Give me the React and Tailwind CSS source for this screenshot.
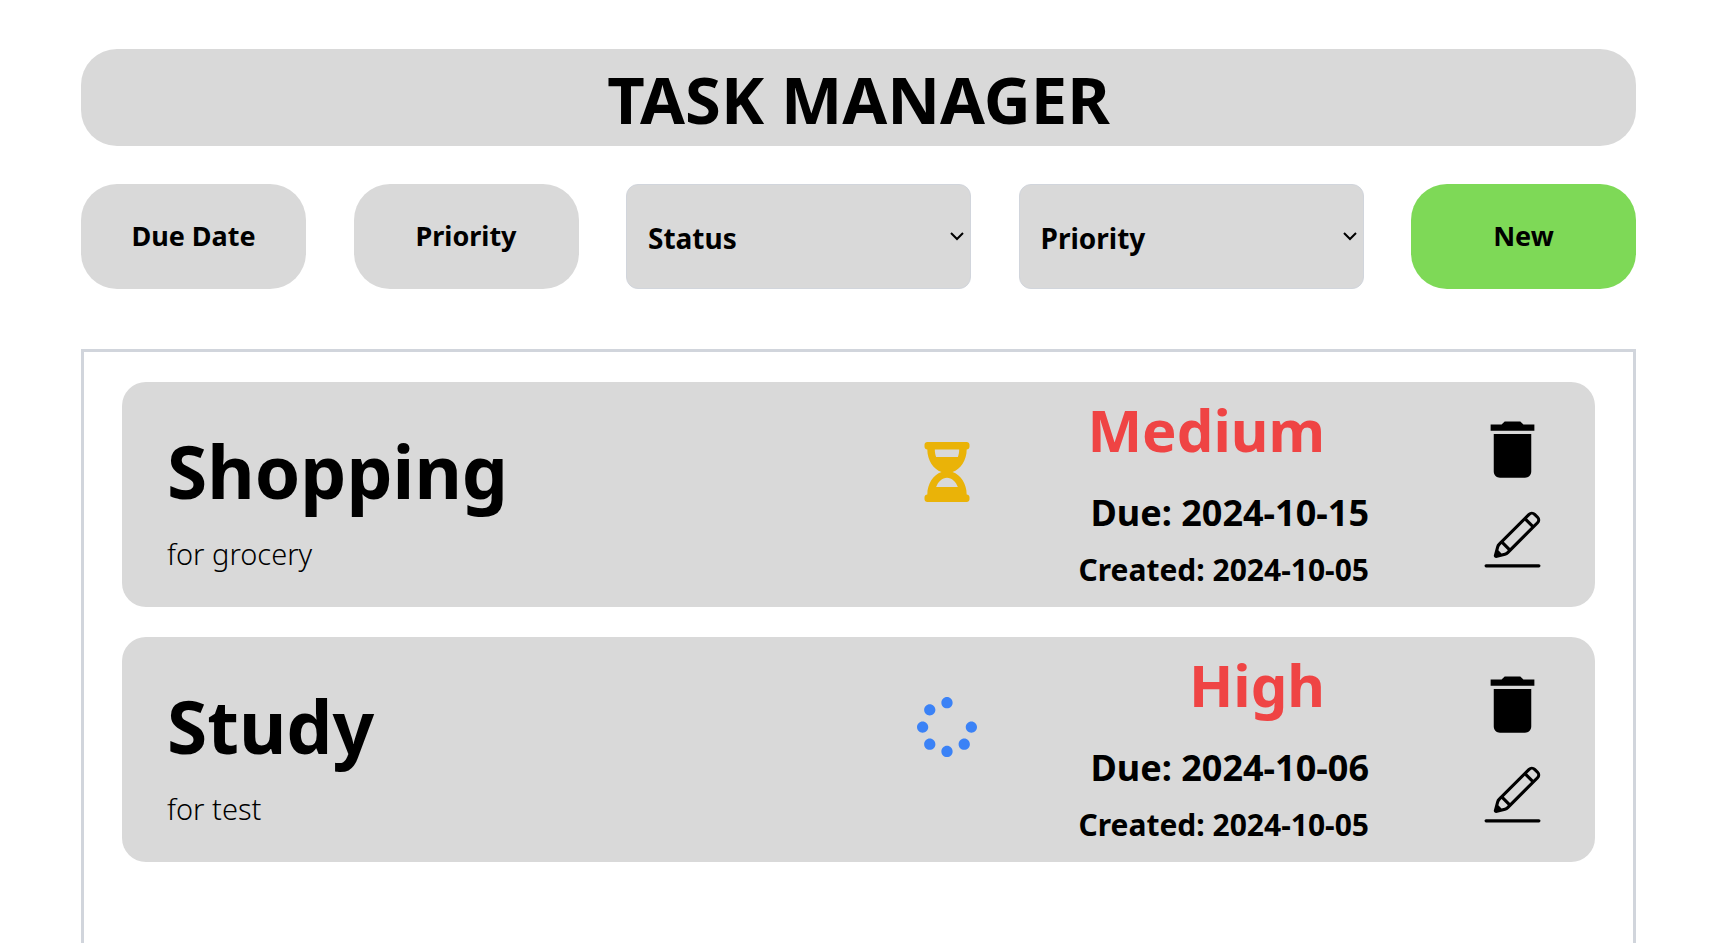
import React from 'react';
import { FaHourglassHalf, FaSpinner } from 'react-icons/fa';
import { MdDelete } from 'react-icons/md';
import { CiEdit } from 'react-icons/ci';

const tasks = [
  {
    title: 'Shopping',
    description: 'for grocery',
    status: 'pending',
    priority: 'Medium',
    due: '2024-10-15',
    created: '2024-10-05',
  },
  {
    title: 'Study',
    description: 'for test',
    status: 'in-progress',
    priority: 'High',
    due: '2024-10-06',
    created: '2024-10-05',
  },
];

function PillButton({ children, color }) {
  return (
    <button
      type="button"
      className={`h-[105px] w-[225px] shrink-0 rounded-[36px] text-[27px] font-bold ${color}`}
    >
      {children}
    </button>
  );
}

function FilterSelect({ label, options }) {
  return (
    <div className="relative w-[345px]">
      <select
        aria-label={label}
        defaultValue=""
        className="h-[105px] w-full appearance-none rounded-xl border border-gray-300 bg-[#d9d9d9] pt-0.5 pr-10 pl-[21px] text-[28px] font-bold"
      >
        <option value="">{label}</option>
        {options.map((option) => (
          <option key={option}>{option}</option>
        ))}
      </select>
      <svg
        viewBox="0 0 14 9"
        className="pointer-events-none absolute top-12 right-[7px] h-[9px] w-3.5"
        fill="none"
        stroke="currentColor"
        strokeWidth="2"
        aria-hidden="true"
      >
        <path d="M1 1l6 6 6-6" />
      </svg>
    </div>
  );
}

function StatusIcon({ status }) {
  return status === 'pending' ? (
    <FaHourglassHalf className="size-[60px] text-[#eab308]" />
  ) : (
    <FaSpinner className="size-[60px] text-[#3b82f6]" />
  );
}

function TaskCard({ task }) {
  return (
    <li className="flex h-[225px] rounded-3xl bg-[#d9d9d9] px-[45px]">
      <div className="flex min-w-0 flex-1 flex-col gap-[25px] pt-[51px]">
        <h2 className="text-[73px] leading-[76px] font-bold">{task.title}</h2>
        <p className="text-[29px] leading-10 font-light">{task.description}</p>
      </div>
      <div className="mr-[104px] pt-[60px]">
        <StatusIcon status={task.status} />
      </div>
      <div className="mr-[106px] flex w-72 flex-col items-end pt-[18px] font-bold whitespace-nowrap">
        <p className="mr-11 text-[58px] leading-[60px] text-[#ef4444]">{task.priority}</p>
        <p className="mt-[33px] text-[36px] leading-10">Due: {task.due}</p>
        <p className="mt-[17px] text-[30px] leading-10">Created: {task.created}</p>
      </div>
      <div className="flex flex-col gap-[15px] pt-[30px]">
        <button type="button" aria-label="Delete task">
          <MdDelete className="size-[75px]" />
        </button>
        <button type="button" aria-label="Edit task">
          <CiEdit className="size-[75px]" />
        </button>
      </div>
    </li>
  );
}

export default function App() {
  return (
    <div className="flex min-h-screen flex-col bg-white pt-[49px] pr-[85px] pl-[81px] font-['Noto_Sans',sans-serif] text-black">
      <h1 className="flex h-[97px] items-center justify-center rounded-[36px] bg-[#d9d9d9] pt-1 text-[65px] leading-none font-bold">
        TASK MANAGER
      </h1>
      <div className="mt-[38px] flex items-center justify-between">
        <PillButton color="bg-[#d9d9d9]">Due Date</PillButton>
        <PillButton color="bg-[#d9d9d9]">Priority</PillButton>
        <FilterSelect label="Status" options={['Pending', 'In Progress', 'Completed']} />
        <FilterSelect label="Priority" options={['Low', 'Medium', 'High']} />
        <PillButton color="bg-[#7ed957]">New</PillButton>
      </div>
      <ul className="mt-[60px] flex flex-1 flex-col gap-[30px] border-[3px] border-b-0 border-gray-300 px-[38px] pt-[30px]">
        {tasks.map((task) => (
          <TaskCard key={task.title} task={task} />
        ))}
      </ul>
    </div>
  );
}
